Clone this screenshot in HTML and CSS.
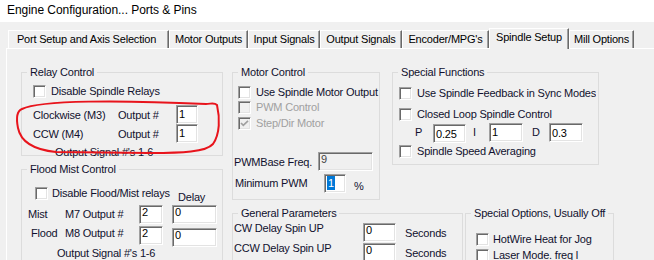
FILE: index.html
```html
<!DOCTYPE html>
<html>
<head>
<meta charset="utf-8">
<link rel="stylesheet" href="styles.css">
</head>
<body>
<div class="titlebar">Engine Configuration... Ports &amp; Pins</div>
<div class="tabs">
  <div class="tab t1">Port Setup and Axis Selection</div>
  <div class="tab t2">Motor Outputs</div>
  <div class="tab t3">Input Signals</div>
  <div class="tab t4">Output Signals</div>
  <div class="tab t5">Encoder/MPG's</div>
  <div class="tab t6 active">Spindle Setup</div>
  <div class="tab t7">Mill Options</div>
</div>
<div class="panel">
  <div class="col-left">
    <div class="group relay">
      <span class="legend">Relay Control</span>
      <div class="row relay-cb"><span class="cb"></span><span class="cb-text">Disable Spindle Relays</span></div>
      <div class="row relay-out first"><span class="lbl w-dir">Clockwise (M3)</span><span class="lbl w-outn">Output #</span><span class="edit w22 mid">1</span></div>
      <div class="row relay-out"><span class="lbl w-dir">CCW (M4)</span><span class="lbl w-outn">Output #</span><span class="edit w22 mid">1</span></div>
      <div class="note relay-note">Output Signal #'s 1-6</div>
    </div>
    <div class="group flood">
      <span class="legend">Flood Mist Control</span>
      <div class="row flood-cb"><span class="cb"></span><span class="cb-text w-fm">Disable Flood/Mist relays</span><span class="delay-h">Delay</span></div>
      <div class="row flood-r"><span class="lbl fl-a">Mist</span><span class="lbl fl-b">M7 Output #</span><span class="edit w24">2</span><span class="edit w45 dl">0</span></div>
      <div class="row flood-r flood2"><span class="lbl fl-a fl-pad">Flood</span><span class="lbl fl-b">M8 Output #</span><span class="edit w24 m1">2</span><span class="edit w45 dl m3">0</span></div>
      <div class="note flood-note">Output Signal #'s 1-6</div>
    </div>
  </div>
  <div class="col-right">
    <div class="top-row">
      <div class="group motor">
        <span class="legend">Motor Control</span>
        <div class="row mc-cb mc1"><span class="cb"></span><span class="cb-text">Use Spindle Motor Output</span></div>
        <div class="row mc-cb mc2"><span class="cb dis"></span><span class="cb-text disabled">PWM Control</span></div>
        <div class="row mc-cb mc3"><span class="cb dis"><svg width="11" height="11" viewBox="0 0 11 11"><path d="M2 5 L4.3 7.4 L9 2.8" fill="none" stroke="#a0a0a0" stroke-width="1.7"/></svg></span><span class="cb-text disabled">Step/Dir Motor</span></div>
        <div class="row pwm-base"><span class="lbl pb-l">PWMBase Freq.</span><span class="edit w55 ro">9</span></div>
        <div class="row pwm-min"><span class="lbl pm-l">Minimum PWM</span><span class="edit w22 selbox"><span class="sel">1</span></span><span class="pct">%</span></div>
      </div>
      <div class="group sf">
        <span class="legend">Special Functions</span>
        <div class="row sf-cb s1"><span class="cb"></span><span class="cb-text clip">Use Spindle Feedback in Sync Modes</span></div>
        <div class="row sf-cb s2"><span class="cb"></span><span class="cb-text">Closed Loop Spindle Control</span></div>
        <div class="row pid"><span class="lbl p-l">P</span><span class="edit w33 low m1">0.25</span><span class="lbl i-l">I</span><span class="edit w34 mid">1</span><span class="lbl d-l">D</span><span class="edit w34 low">0.3</span></div>
        <div class="row sf-cb s3"><span class="cb"></span><span class="cb-text">Spindle Speed Averaging</span></div>
      </div>
    </div>
    <div class="bottom-row">
      <div class="group gen">
        <span class="legend">General Parameters</span>
        <div class="row gen-r g1"><span class="lbl g-l">CW Delay Spin UP</span><span class="edit w33">0</span><span class="secs">Seconds</span></div>
        <div class="row gen-r g2"><span class="lbl g-l">CCW Delay Spin UP</span><span class="edit w33">0</span><span class="secs">Seconds</span></div>
      </div>
      <div class="group opts">
        <span class="legend">Special Options, Usually Off</span>
        <div class="row op-cb o1"><span class="cb"></span><span class="cb-text">HotWire Heat for Jog</span></div>
        <div class="row op-cb o2"><span class="cb"></span><span class="cb-text">Laser Mode. freq l</span></div>
      </div>
    </div>
  </div>
</div>
<svg class="ink" width="654" height="260" viewBox="0 0 654 260"><path d="M22 109 C40 100 120 100 206 104 C211 104 214 102 217 105 C220 118 220 134 213 144 C206 152 182 153 150 153 L56 152 C36 150 21 143 18 128 C16 118 17 111 22 109" fill="none" stroke="#e8141c" stroke-width="2" stroke-linecap="round"/></svg>
</body>
</html>
```
FILE: styles.css
```css
* { box-sizing: border-box; }
html, body { margin: 0; }
body {
  width: 654px;
  height: 260px;
  overflow: hidden;
  position: relative;
  background: #f0f0f0;
  font-family: "Liberation Sans", Arial, sans-serif;
  font-size: 11px;
  letter-spacing: -0.2px;
  color: #10102e;
}
.titlebar {
  height: 22px;
  background: #fff;
  padding-left: 7px;
  line-height: 20px;
  font-size: 12px;
  letter-spacing: -0.05px;
  color: #000;
}
.tabs {
  display: flex;
  align-items: flex-end;
  height: 20px;
  margin-top: 6px;
  padding-left: 8px;
}
.tab {
  height: 18px;
  border-top: 1px solid #fff;
  border-left: 1px solid #fff;
  border-right: 1px solid #696969;
  box-shadow: inset -1px 0 0 #a0a0a0;
  text-align: center;
  line-height: 17px;
  white-space: nowrap;
  color: #000;
}
.tab.active {
  height: 21px;
  margin-bottom: -1px;
  position: relative;
  z-index: 1;
  background: #f0f0f0;
  padding-bottom: 3px;
}
.t1 { width: 161px; padding-right: 4px; }
.t2 { width: 79px; }
.t3 { width: 72px; }
.t4 { width: 82px; }
.t5 { width: 87px; }
.t6 { width: 80px; }
.t7 { width: 65px; }
.panel {
  display: flex;
  align-items: flex-start;
  margin-left: 6px;
  height: 212px;
  border-top: 1px solid #fff;
  border-left: 1px solid #fff;
  padding: 23px 0 0 14px;
}
.col-left { width: 202px; display: flex; flex-direction: column; flex: none; }
.col-right { margin-left: 9px; display: flex; flex-direction: column; }
.top-row, .bottom-row { display: flex; align-items: flex-start; }
.bottom-row { margin-top: 13px; }

.group {
  position: relative;
  border: 1px solid #dcdcdc;
  flex: none;
}
.legend {
  position: absolute;
  top: -7px;
  left: 5px;
  padding: 0 3px;
  background: #f0f0f0;
  line-height: 13px;
  white-space: nowrap;
}
.row { display: flex; align-items: flex-start; }
.lbl, .cb-text, .note, .delay-h, .secs, .pct { white-space: nowrap; }
.cb-text { margin-left: 5px; line-height: 13px; }
.disabled { color: #a0a0a0; }

.cb {
  width: 13px;
  height: 13px;
  flex: none;
  display: flex;
  align-items: center;
  justify-content: center;
  background: #fff;
  border: 1px solid;
  border-color: #a0a0a0 #fff #fff #a0a0a0;
  box-shadow: inset 1px 1px 0 #696969, inset -1px -1px 0 #e3e3e3;
}
.cb.dis { background: #f0f0f0; }
.cb svg { display: block; }

.edit {
  flex: none;
  height: 19px;
  background: #fff;
  border: 1px solid;
  border-color: #a0a0a0 #fff #fff #a0a0a0;
  box-shadow: inset 1px 1px 0 #696969, inset -1px -1px 0 #e3e3e3;
  padding: 1px 2px 0 2px;
  line-height: 11px;
  color: #000;
  white-space: nowrap;
  overflow: hidden;
}
.edit.ro { background: #f0f0f0; color: #444; }
.edit.low { padding-top: 4px; }
.edit.mid { padding-top: 3px; }
.edit.selbox { padding-top: 1px; }
.sel { background: #0078d7; color: #fff; display: inline-block; line-height: 14px; padding: 0 1px; }
.w22 { width: 22px; }
.w24 { width: 24px; }
.w33 { width: 33px; }
.w34 { width: 34px; }
.w45 { width: 45px; }
.w55 { width: 55px; }
.m1 { margin-top: 1px; }
.m3 { margin-top: 3px; }

/* Relay */
.relay { height: 84px; }
.relay-cb { margin: 12px 0 0 11px; align-items: center; }
.relay-out { margin-left: 11px; align-items: center; height: 19px; }
.relay-out.first { margin-top: 7px; }
.w-dir { width: 85px; }
.w-outn { width: 58px; }
.relay-note { margin: 3px 0 0 33px; line-height: 13px; }

/* Flood */
.flood { margin-top: 13px; height: 100px; }
.flood-cb { margin: 17px 0 0 13px; }
.flood-cb .cb-text { margin-left: 4px; width: 126px; }
.delay-h { margin-top: 4px; line-height: 13px; }
.flood-r { margin: 1px 0 0 6px; }
.fl-a { width: 37px; line-height: 19px; }
.fl-pad { padding-left: 3px; }
.fl-b { width: 74px; line-height: 19px; }
.flood2 .lbl { margin-top: -1px; }
.dl { margin-left: 9px; }
.flood-note { margin-left: 35px; line-height: 13px; }

/* Motor */
.motor { width: 148px; height: 128px; }
.mc-cb { margin-left: 5px; align-items: center; }
.mc1 { margin-top: 13px; }
.mc2 { margin-top: 2px; }
.mc3 { margin-top: 3px; }
.pwm-base { margin: 22px 0 0 1px; align-items: center; }
.pb-l { width: 84px; }
.pwm-min { margin: 3px 0 0 2px; }
.pm-l { width: 89px; line-height: 19px; }
.pct { margin: 6px 0 0 8px; line-height: 13px; }

/* Special functions */
.sf { margin-left: 12px; width: 207px; height: 93px; }
.sf-cb { margin-left: 6px; align-items: center; }
.s1 { margin-top: 14px; }
.s2 { margin-top: 8px; }
.s3 { margin-top: 2px; }
.clip { max-width: 180px; overflow: hidden; }
.pid { margin-top: 2px; }
.pid .lbl { line-height: 19px; }
.p-l { margin-left: 22px; width: 18px; }
.i-l { margin-left: 7px; width: 16px; }
.d-l { margin-left: 9px; width: 17px; }

/* General */
.gen { width: 231px; height: 60px; }
.gen-r { margin-left: 1px; }
.g1 { margin-top: 9px; }
.g2 { margin-top: 1px; }
.g-l { width: 129px; line-height: 13px; margin-top: -1px; }
.secs { margin: 4px 0 0 9px; line-height: 13px; }

/* Options */
.opts { margin-left: 2px; width: 149px; height: 60px; }
.op-cb { margin-left: 10px; align-items: center; }
.op-cb .cb-text { margin-left: 4px; }
.o1 { margin-top: 19px; }
.o2 { margin-top: 3px; }

.ink { position: absolute; left: 0; top: 0; pointer-events: none; }
```
